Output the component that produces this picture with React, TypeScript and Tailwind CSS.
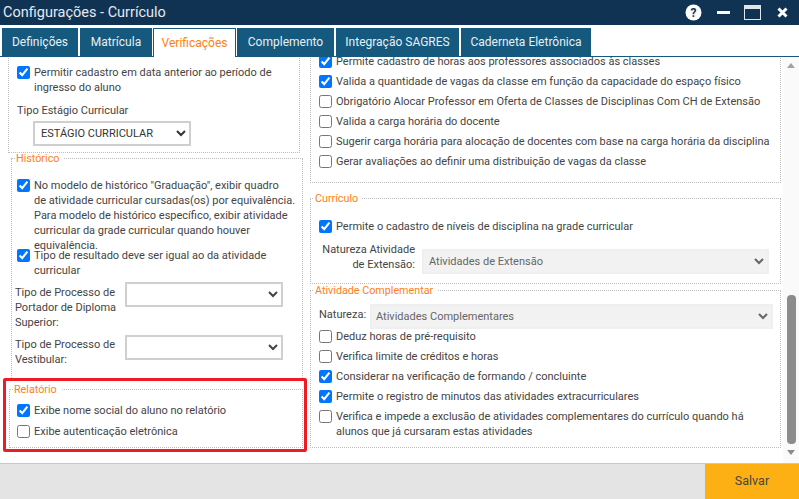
import React from 'react';

const font = { fontFamily: 'Roboto, "Noto Sans", sans-serif' };

const tabs = [
  { label: 'Definições', w: 'w-[76px]' },
  { label: 'Matrícula', w: 'w-[72px]' },
  { label: 'Verificações', w: 'w-[83px]', active: true },
  { label: 'Complemento', w: 'w-[97px]' },
  { label: 'Integração SAGRES', w: 'w-[123px]' },
  { label: 'Caderneta Eletrônica', w: 'w-[130px]' },
];

const Check: React.FC<{ checked?: boolean; className?: string; children: React.ReactNode }> = ({ checked, className, children }) => (
  <label className={`flex items-start ${className || ''}`}>
    <input type="checkbox" defaultChecked={checked} className="mt-[1px] mr-[4px] w-[13px] h-[13px] shrink-0" />
    <span className="leading-[15px] whitespace-nowrap">{children}</span>
  </label>
);

const Box: React.FC<{ title?: string; className?: string; inner?: string; children: React.ReactNode }> = ({ title, className, inner, children }) => (
  <fieldset className={`border border-dotted border-[#bdbdbd] ${className || ''}`}>
    {title && <legend className="ml-[3px] px-[1px] pr-[4px] text-[10.75px] leading-[15px] text-[#ff7f16]">{title}</legend>}
    <div className={inner}>{children}</div>
  </fieldset>
);

const App: React.FC = () => {
  return (
    <div className="w-[799px] h-[499px] overflow-hidden bg-white flex flex-col text-[11px] text-[#444444]" style={font}>
      <header className="h-[25px] shrink-0 bg-[#103354] flex items-center justify-between pl-[3px] pr-[11px]">
        <span className="text-[14.5px] text-[#e4e9ee]">Configurações - Currículo</span>
        <div className="flex items-center">
          <svg width="17" height="17" viewBox="0 0 17 17" className="mr-[15px]">
            <circle cx="8.5" cy="8.5" r="8" fill="#ffffff" />
            <text x="8.5" y="12.5" textAnchor="middle" fontSize="12" fontWeight="700" fill="#10335a">?</text>
          </svg>
          <div className="w-[13px] h-[3px] bg-white mr-[14px]" />
          <svg width="17" height="15" viewBox="0 0 17 15" className="mr-[16px]">
            <rect x="0.5" y="0.5" width="16" height="14" fill="none" stroke="#dfe5ea" />
            <rect x="1" y="1" width="15" height="3" fill="#dfe5ea" />
          </svg>
          <svg width="11" height="11" viewBox="0 0 11 11">
            <path d="M1.5 1.5 L9.5 9.5 M9.5 1.5 L1.5 9.5" stroke="#ffffff" strokeWidth="3" />
          </svg>
        </div>
      </header>

      <nav className="h-[32px] shrink-0 flex items-end gap-[2px] pl-[2px] border-b border-[#155a7e] bg-white">
        {tabs.map((t) => (
          <div
            key={t.label}
            className={`${t.w} flex items-center justify-center text-[12px] ${
              t.active
                ? 'h-[29px] -mb-[1px] -mx-[1px] bg-white text-[#ff7f16] border border-b-0 border-[#155a7e]'
                : 'h-[28px] bg-[#155a7e] text-[#e8eff3]'
            }`}
          >
            {t.label}
          </div>
        ))}
      </nav>

      <main className="flex-1 min-h-0 flex overflow-hidden">
        <div className="w-[310px] shrink-0 px-[3px]">
          <Box className="ml-[5px] mr-[7px] -mt-[20px] h-[116px]" inner="pt-[27px] pl-[8px]">
            <Check checked>Permitir cadastro em data anterior ao período de<br />ingresso do aluno</Check>
            <div className="mt-[8px] leading-[15px]">Tipo Estágio Curricular</div>
            <select className="mt-[3px] ml-[16px] w-[158px] h-[25px] pl-[2px] border-2 border-[#cfcfcf] text-[#333333] bg-white text-[11px]" defaultValue="a">
              <option value="a">ESTÁGIO CURRICULAR</option>
            </select>
          </Box>

          <Box title="Histórico" className="ml-[8px] mr-[4px] -mt-[2px] h-[227px] border-b-0" inner="pt-[12px] pl-[5px]">
            <Check checked>
              No modelo de histórico "Graduação", exibir quadro<br />
              de atividade curricular cursadas(os) por equivalência.<br />
              Para modelo de histórico específico, exibir atividade<br />
              curricular da grade curricular quando houver<br />
              equivalência.
            </Check>
            <Check checked className="-mt-[5px]">Tipo de resultado deve ser igual ao da atividade<br />curricular</Check>
            <div className="flex items-start mt-[4px] -ml-[2px]">
              <span className="w-[110px] shrink-0 leading-[15px] pt-[3px]">Tipo de Processo de<br />Portador de Diploma<br />Superior:</span>
              <select className="w-[158px] h-[25px] border-2 border-[#cfcfcf] bg-white" />
            </div>
            <div className="flex items-start mt-[5px] -ml-[2px]">
              <span className="w-[110px] shrink-0 leading-[15px] pt-[2px]">Tipo de Processo de<br />Vestibular:</span>
              <select className="w-[158px] h-[25px] border-2 border-[#cfcfcf] bg-white" />
            </div>
          </Box>

          <div className="border-[3px] border-[#ee1c25] rounded-[2px] h-[74px] pl-[3px] pr-[1px] pt-[1px]">
            <Box title="Relatório" className="h-[66px]" inner="pl-[7px] pt-[6px]">
              <Check checked>Exibe nome social do aluno no relatório</Check>
              <Check className="mt-[6px]">Exibe autenticação eletrônica</Check>
            </Box>
          </div>
        </div>

        <div className="w-[473px] shrink-0 pr-[2px]">
          <Box className="-mt-[20px] h-[146px]" inner="pl-[8px] pt-[16px] flex flex-col gap-[5px]">
            <Check checked>Permite cadastro de horas aos professores associados às classes</Check>
            <Check checked>Valida a quantidade de vagas da classe em função da capacidade do espaço físico</Check>
            <Check>Obrigatório Alocar Professor em Oferta de Classes de Disciplinas Com CH de Extensão</Check>
            <Check>Valida a carga horária do docente</Check>
            <Check>Sugerir carga horária para alocação de docentes com base na carga horária da disciplina</Check>
            <Check>Gerar avaliações ao definir uma distribuição de vagas da classe</Check>
          </Box>

          <Box title="Currículo" className="mt-[8px] h-[93px]" inner="pl-[8px] pt-[13px]">
            <Check checked>Permite o cadastro de níveis de disciplina na grade curricular</Check>
            <div className="flex items-start mt-[8px]">
              <span className="w-[96px] text-right shrink-0 leading-[15px]">Natureza Atividade<br />de Extensão:</span>
              <select disabled className="mt-[7px] ml-[7px] w-[347px] h-[25px] pl-[1px] border-2 border-[#efefef] bg-[#f2f2f2] text-[#666666] opacity-100" defaultValue="a">
                <option value="a">Atividades de Extensão</option>
              </select>
            </div>
          </Box>

          <Box title="Atividade Complementar" className="-mt-[1px] h-[165px]" inner="pl-[8px] pt-[6px]">
            <div className="flex items-start">
              <span className="leading-[15px] pt-[3px] w-[51px] shrink-0">Natureza:</span>
              <select disabled className="w-[403px] h-[25px] pl-[0px] border-2 border-[#efefef] bg-[#f2f2f2] text-[#666666] opacity-100" defaultValue="a">
                <option value="a">Atividades Complementares</option>
              </select>
            </div>
            <div className="flex flex-col gap-[5px]">
              <Check>Deduz horas de pré-requisito</Check>
              <Check>Verifica limite de créditos e horas</Check>
              <Check checked>Considerar na verificação de formando / concluinte</Check>
              <Check checked>Permite o registro de minutos das atividades extracurriculares</Check>
              <Check>Verifica e impede a exclusão de atividades complementares do currículo quando há<br />alunos que já cursaram estas atividades</Check>
            </div>
          </Box>
        </div>

        <div className="w-[16px] shrink-0 bg-[#fafafa] flex flex-col items-center">
          <div className="mt-[6px] w-0 h-0 border-x-[4px] border-x-transparent border-b-[5px] border-b-[#a3a3a3]" />
          <div className="mt-[227px] w-[9px] h-[149px] rounded-[4px] bg-[#8c8c8c]" />
          <div className="mt-[6px] w-0 h-0 border-x-[4px] border-x-transparent border-t-[5px] border-t-[#8c8c8c]" />
        </div>
      </main>

      <footer className="h-[36px] shrink-0 bg-[#e4e4e4] border-t border-[#c8c8c8] flex justify-end">
        <button className="w-[94px] bg-[#fdb014] text-[#444444] text-[12.5px]">Salvar</button>
      </footer>
    </div>
  );
};

export default App;
